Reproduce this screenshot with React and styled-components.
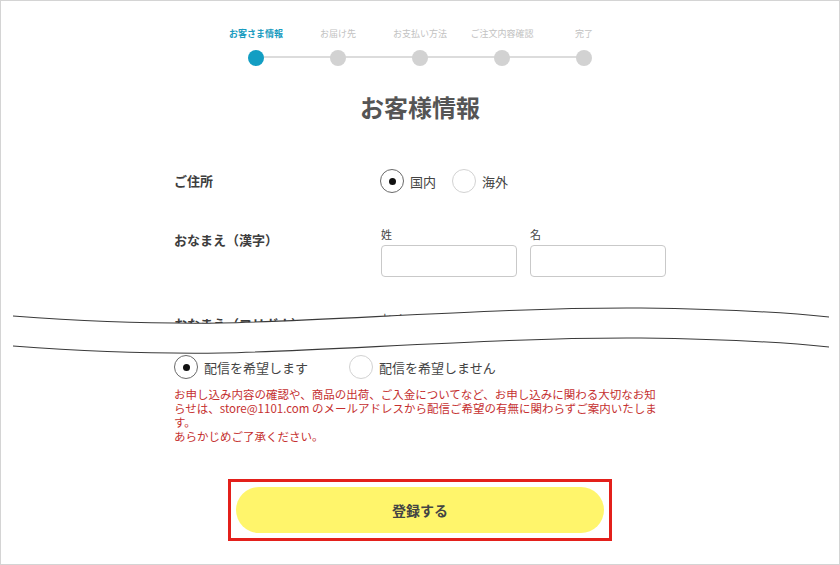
import React from "react";
import styled, { createGlobalStyle } from "styled-components";

const GlobalStyle = createGlobalStyle`
  body {
    margin: 0;
    background: #fff;
    font-family: "Noto Sans CJK JP", "Noto Sans", sans-serif;
    color: #333;
  }
`;

const Frame = styled.div`
  position: relative;
  width: 840px;
  height: 565px;
  box-sizing: border-box;
  border: 1px solid #d4d4d4;
  padding-top: 27px;
  overflow: hidden;
  background: #fff;
`;

const Stepper = styled.ol`
  list-style: none;
  margin: 0 auto;
  padding: 0;
  width: 410px;
  display: grid;
  grid-template-columns: repeat(5, 1fr);
`;

const Step = styled.li`
  position: relative;
  display: flex;
  flex-direction: column;
  align-items: center;
  &:not(:last-child)::after {
    content: "";
    position: absolute;
    top: 28px;
    left: 50%;
    width: 100%;
    height: 2px;
    background: #dcdcdc;
  }
`;

const StepLabel = styled.span`
  font-size: 9px;
  line-height: 12px;
  white-space: nowrap;
  font-weight: ${(p) => (p.$active ? 700 : 400)};
  color: ${(p) => (p.$active ? "#1a9cc0" : "#c2c2c2")};
`;

const StepDot = styled.span`
  position: relative;
  z-index: 1;
  margin-top: 10px;
  width: 16px;
  height: 16px;
  border-radius: 50%;
  background: ${(p) => (p.$active ? "#139ec3" : "#d2d2d2")};
`;

const Title = styled.h1`
  margin: 26px 0 47px;
  text-align: center;
  font-size: 24px;
  line-height: 30px;
  font-weight: 700;
  color: #555;
`;

const FormTop = styled.div`
  width: 492px;
  height: 166px;
  margin: 0 auto;
  overflow: hidden;
  display: flex;
  flex-direction: column;
  gap: 35px;
`;

const FormBottom = styled.div`
  width: 492px;
  margin: 20px auto 0;
`;

const Row = styled.div`
  display: grid;
  grid-template-columns: 206px 1fr;
  align-items: ${(p) => (p.$center ? "center" : "start")};
`;

const RowLabel = styled.div`
  font-size: 13px;
  line-height: 18px;
  font-weight: 700;
  color: #3d3d3d;
  padding-top: ${(p) => (p.$top ? "3px" : "0")};
`;

const Options = styled.div`
  display: flex;
  align-items: center;
  gap: ${(p) => p.$gap || "16px"};
`;

const Option = styled.label`
  display: flex;
  align-items: center;
  gap: 6px;
  font-size: 13px;
  color: #444;
`;

const RadioCircle = styled.span`
  width: 24px;
  height: 24px;
  box-sizing: border-box;
  border-radius: 50%;
  border: 1px solid ${(p) => (p.$checked ? "#6a6a6a" : "#d2d2d2")};
  display: flex;
  align-items: center;
  justify-content: center;
  &::after {
    content: "";
    width: 7px;
    height: 7px;
    border-radius: 50%;
    background: #111;
    display: ${(p) => (p.$checked ? "block" : "none")};
  }
`;

const Fields = styled.div`
  display: flex;
  gap: 13px;
  padding-left: 1px;
`;

const Field = styled.div`
  display: flex;
  flex-direction: column;
  gap: 4px;
`;

const SubLabel = styled.span`
  font-size: 11px;
  line-height: 13px;
  color: #444;
`;

const TextBox = styled.input`
  width: 136px;
  height: 32px;
  box-sizing: border-box;
  border: 1px solid #c9c9c9;
  border-radius: 4px;
  padding: 0 8px;
  font: inherit;
`;

const Tear = styled.svg`
  position: absolute;
  left: 0;
  top: 0;
  pointer-events: none;
`;

const Notice = styled.p`
  margin: 8px 0 0;
  font-size: 11.5px;
  line-height: 14px;
  color: #c53030;
  width: 490px;
`;

const SubmitArea = styled.div`
  display: flex;
  justify-content: center;
  margin-top: 36px;
`;

const Highlight = styled.div`
  border: 3px solid #e3201b;
  padding: 5px;
`;

const SubmitButton = styled.button`
  width: 368px;
  height: 46px;
  border: none;
  border-radius: 23px;
  background: #fff56b;
  font-family: inherit;
  font-size: 14px;
  font-weight: 700;
  color: #444;
  cursor: pointer;
`;

const steps = ["お客さま情報", "お届け先", "お支払い方法", "ご注文内容確認", "完了"];

const curveTop =
  "M12,315 C80,320 150,323 220,322 C330,320 500,306 640,307 C720,308 780,311 828,316";
const curveBottom =
  "M12,345 C80,350 150,353 220,352 C330,350 500,336 640,337 C720,338 780,341 828,346";
const gapFill =
  curveTop +
  " L828,346 C780,341 720,338 640,337 C500,336 330,350 220,352 C150,353 80,350 12,345 Z";

const Radio = ({ checked, children }) => (
  <Option>
    <RadioCircle $checked={checked} />
    {children}
  </Option>
);

const NameRow = ({ label, first, last }) => (
  <Row>
    <RowLabel $top>{label}</RowLabel>
    <Fields>
      <Field>
        <SubLabel>{first}</SubLabel>
        <TextBox />
      </Field>
      <Field>
        <SubLabel>{last}</SubLabel>
        <TextBox />
      </Field>
    </Fields>
  </Row>
);

export default function App() {
  return (
    <>
      <GlobalStyle />
      <Frame>
        <Stepper>
          {steps.map((s, i) => (
            <Step key={s}>
              <StepLabel $active={i === 0}>{s}</StepLabel>
              <StepDot $active={i === 0} />
            </Step>
          ))}
        </Stepper>

        <Title>お客様情報</Title>

        <FormTop>
          <Row $center>
            <RowLabel>ご住所</RowLabel>
            <Options>
              <Radio checked>国内</Radio>
              <Radio>海外</Radio>
            </Options>
          </Row>
          <NameRow label="おなまえ（漢字）" first="姓" last="名" />
          <NameRow label="おなまえ（フリガナ）" first="セイ" last="メイ" />
        </FormTop>

        <FormBottom>
          <Options $gap="41px">
            <Radio checked>配信を希望します</Radio>
            <Radio>配信を希望しません</Radio>
          </Options>
          <Notice>
            お申し込み内容の確認や、商品の出荷、ご入金についてなど、お申し込みに関わる大切なお知らせは、store@1101.com
            のメールアドレスから配信ご希望の有無に関わらずご案内いたします。
            <br />
            あらかじめご了承ください。
          </Notice>
        </FormBottom>

        <SubmitArea>
          <Highlight>
            <SubmitButton type="button">登録する</SubmitButton>
          </Highlight>
        </SubmitArea>

        <Tear width="840" height="565" viewBox="0 0 840 565">
          <path d={gapFill} fill="#fff" />
          <path d={curveTop} fill="none" stroke="#3a3a3a" strokeWidth="1.1" />
          <path d={curveBottom} fill="none" stroke="#3a3a3a" strokeWidth="1.1" />
        </Tear>
      </Frame>
    </>
  );
}
